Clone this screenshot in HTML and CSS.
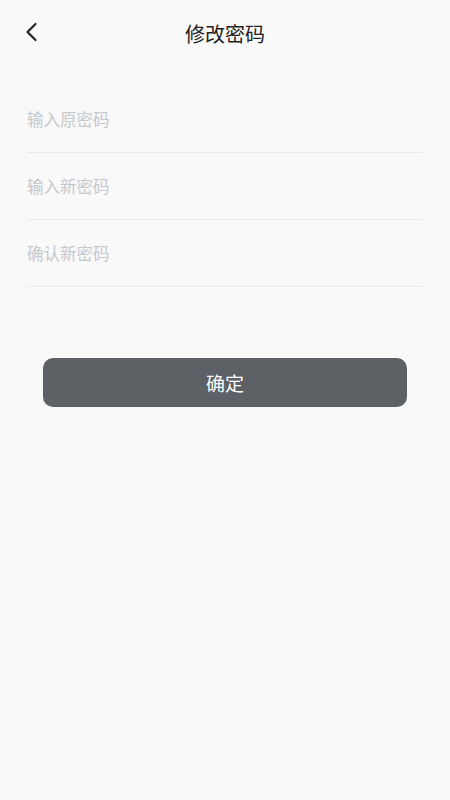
FILE: index.html
```html
<!DOCTYPE html>
<html lang="zh-CN">
<head>
  <meta charset="UTF-8">
  <meta name="viewport" content="width=device-width, initial-scale=1.0">
  <title>修改密码</title>
  <link rel="stylesheet" href="styles.css">
</head>
<body>
  <div class="header">
    <div class="back">
      <svg width="14" height="20" viewBox="0 0 14 20">
        <path d="M10.5 2 L2.5 10 L10.5 18" fill="none" stroke="#222" stroke-width="2.2" stroke-linecap="round" stroke-linejoin="round"/>
      </svg>
    </div>
    <div class="title">修改密码</div>
  </div>
  <div class="form">
    <div class="row">
      <input type="password" class="field" placeholder="输入原密码">
    </div>
    <div class="row">
      <input type="password" class="field" placeholder="输入新密码">
    </div>
    <div class="row">
      <input type="password" class="field" placeholder="确认新密码">
    </div>
  </div>
  <div class="submit">确定</div>
</body>
</html>
```

FILE: styles.css
```css
body {
  margin: 0;
  background-color: #f9f9f9;
  font-family: "Noto Sans CJK SC", "Noto Sans", sans-serif;
}
.header {
  position: relative;
  height: 66px;
  display: flex;
  justify-content: center;
  align-items: center;
}
.back {
  position: absolute;
  left: 25px;
  top: 22px;
  width: 14px;
  height: 20px;
}
.title {
  font-size: 20px;
  color: #222;
}
.form {
  margin: 20px 27px 0;
}
.row {
  height: 66px;
  display: flex;
  align-items: center;
  border-bottom: 1px solid #ebebeb;
}
.field {
  flex: 1;
  border: none;
  outline: none;
  background: transparent;
  padding: 0;
  font-family: inherit;
  font-size: 16.5px;
  color: #333;
}
.field::placeholder {
  color: #c5c8cd;
}
.submit {
  margin: 71px 43px 0;
  height: 49px;
  border-radius: 10px;
  background-color: #5d6065;
  color: #fff;
  font-size: 19px;
  display: flex;
  justify-content: center;
  align-items: center;
}
```
